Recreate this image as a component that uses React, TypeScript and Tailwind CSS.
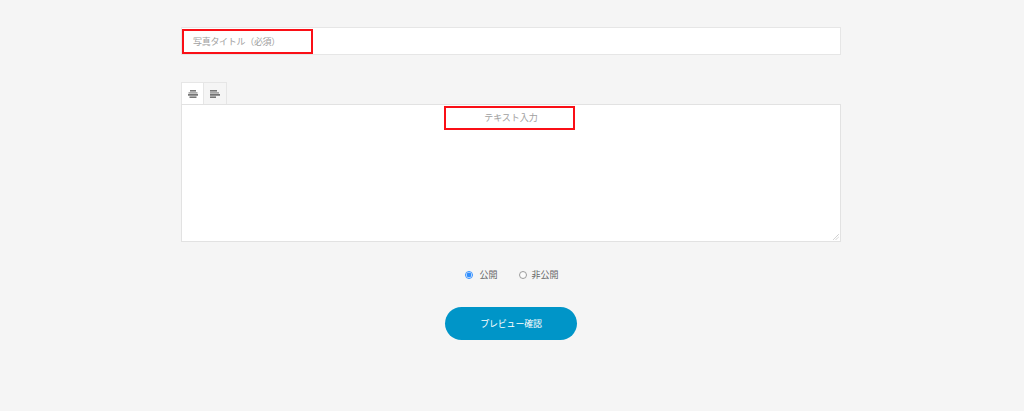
import React from "react";

const font = { fontFamily: '"Noto Sans CJK JP", "Noto Sans", sans-serif' };

function RedBox({ className }: { className: string }) {
  return <div className={"pointer-events-none absolute border-2 border-[#fa0f16] " + className}></div>;
}

function AlignCenterIcon() {
  return (
    <svg width="10" height="10" viewBox="0 0 10 10" className="text-[#555]">
      <rect x="2" y="1" width="6" height="1.6" fill="currentColor" opacity="0.8" />
      <rect x="0.5" y="3.2" width="9" height="1.4" fill="currentColor" opacity="0.6" />
      <rect x="0" y="5.2" width="10" height="1.4" fill="currentColor" />
      <rect x="1.5" y="7.4" width="7" height="1.6" fill="currentColor" opacity="0.8" />
    </svg>
  );
}

function AlignLeftIcon() {
  return (
    <svg width="10" height="10" viewBox="0 0 10 10" className="text-[#555]">
      <rect x="0" y="1" width="7" height="1.6" fill="currentColor" opacity="0.8" />
      <rect x="0" y="3.2" width="9" height="1.4" fill="currentColor" opacity="0.6" />
      <rect x="0" y="5.2" width="10" height="1.4" fill="currentColor" />
      <rect x="0" y="7.4" width="6" height="1.6" fill="currentColor" opacity="0.8" />
    </svg>
  );
}

export default function App() {
  return (
    <div className="h-[411px] w-[1024px] overflow-hidden bg-[#f5f5f5]" style={font}>
      <form className="mx-auto flex w-[660px] -translate-x-px flex-col pt-[27px]">
        <div className="relative">
          <input
            type="text"
            placeholder="写真タイトル（必須）"
            className="block h-[28px] w-full border border-[#e6e6e6] bg-white px-[11px] text-[9px] tracking-[-0.3px] outline-none placeholder:text-[#a0a0a0]"
          />
          <RedBox className="left-[1px] top-[2px] h-[25px] w-[131px]" />
        </div>

        <div className="mt-[27px] flex h-[22px]">
          <button type="button" className="flex w-[23px] items-center justify-center border border-b-0 border-[#e6e6e6] bg-white">
            <AlignCenterIcon />
          </button>
          <button type="button" className="flex w-[23px] items-center justify-center border border-b-0 border-l-0 border-[#e6e6e6] bg-[#f5f5f5]">
            <AlignLeftIcon />
          </button>
        </div>

        <div className="relative">
          <textarea
            placeholder="テキスト入力"
            className="block h-[138px] w-full resize-none border border-[#e2e2e2] bg-white pt-[5px] text-center text-[9px] leading-[16px] outline-none placeholder:text-[#a0a0a0]"
          ></textarea>
          <RedBox className="left-[263px] top-[2px] h-[24px] w-[131px]" />
          <svg width="6" height="6" viewBox="0 0 6 6" className="pointer-events-none absolute bottom-[2px] right-[2px] text-[#aaa]">
            <path d="M0.5 5.5 L5.5 0.5 M3 5.5 L5.5 3" stroke="currentColor" strokeWidth="1" strokeDasharray="1 0.6" fill="none" />
          </svg>
        </div>

        <div className="mt-[25px] flex translate-x-[1px] items-center justify-center gap-[21px] text-[9px] leading-[16px] text-[#666]">
          <label className="flex items-center gap-[6px]">
            <input type="radio" name="status" defaultChecked className="m-0 h-[8px] w-[8px] accent-[#0075ff] opacity-80" />
            公開
          </label>
          <label className="flex items-center gap-[5px]">
            <input type="radio" name="status" className="m-0 h-[8px] w-[8px] opacity-70" />
            非公開
          </label>
        </div>

        <div className="mt-[24px] flex justify-center">
          <button type="button" className="h-[33px] w-[132px] rounded-full bg-[#0095c8] text-[9px] tracking-[-0.2px] text-white">
            プレビュー確認
          </button>
        </div>
      </form>
    </div>
  );
}
